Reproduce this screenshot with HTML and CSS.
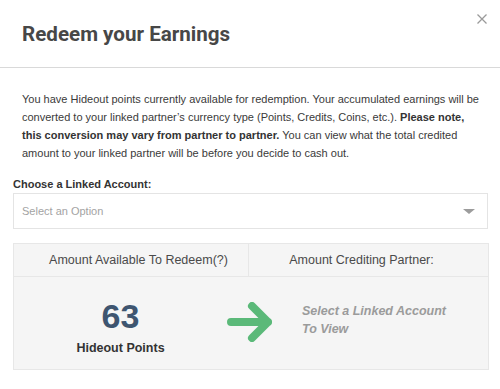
FILE: index.html
```html
<!DOCTYPE html>
<html lang="en">
  <head>
    <meta charset="UTF-8" />
    <meta name="viewport" content="width=device-width, initial-scale=1.0" />
    <title>Redeem your Earnings</title>
    <link rel="stylesheet" href="styles.css">
  </head>
  <body>
    <div class="modal">
      <div class="modal-header">
        <h2 class="modal-title">Redeem your Earnings</h2>
        <button class="close-btn" aria-label="Close">
          <svg width="10" height="10" viewBox="0 0 10 10">
            <path d="M0.5 0.5 L9.5 9.5 M9.5 0.5 L0.5 9.5" stroke="#9a9a9a" stroke-width="1.3" />
          </svg>
        </button>
      </div>

      <div class="modal-body">
        <p class="intro">
          You have Hideout points currently available for redemption. Your accumulated earnings will be
          converted to your linked partner’s currency type (Points, Credits, Coins, etc.).
          <strong>Please note,</strong>
          <strong>this conversion may vary from partner to partner.</strong>
          You can view what the total credited amount to your linked partner will be before you decide to cash out.
        </p>

        <label class="field-label">Choose a Linked Account:</label>
        <div class="select-box">
          <span>Select an Option</span>
          <span class="caret"></span>
        </div>

        <div class="summary">
          <div class="summary-head">
            <div class="head-left">Amount Available To Redeem(?)</div>
            <div class="head-right">Amount Crediting Partner:</div>
          </div>
          <div class="summary-body">
            <div class="points">
              <div class="points-value">63</div>
              <div class="points-label">Hideout Points</div>
            </div>
            <svg class="arrow" width="45" height="40" viewBox="0 0 45 40">
              <path d="M4 20 H41 M25 4 L41 20 L25 36" fill="none" stroke="#5bb979" stroke-width="8" stroke-linecap="round" stroke-linejoin="round" />
            </svg>
            <div class="partner-note">Select a Linked Account<br />To View</div>
          </div>
        </div>
      </div>
    </div>
  </body>
</html>
```

FILE: styles.css
```css
body {
  margin: 0;
  background: #ffffff;
  font-family: "Liberation Sans", Arial, sans-serif;
  color: #333333;
}

.modal {
  width: 500px;
}

.modal-header {
  display: flex;
  justify-content: space-between;
  align-items: flex-start;
  height: 45px;
  padding: 22px 13px 0 22px;
  border-bottom: 1px solid #d9d9d9;
}

.modal-title {
  margin: 0;
  font-family: Roboto, "Liberation Sans", sans-serif;
  font-weight: 700;
  font-size: 20.6px;
  line-height: 24px;
  color: #474747;
}

.close-btn {
  background: none;
  border: none;
  padding: 0;
  margin-top: -8px;
  width: 10px;
  height: 10px;
  display: flex;
}

.modal-body {
  padding: 0 11px 0 13px;
}

.intro {
  margin: 22px 0 0;
  padding: 0 9px;
  font-size: 11px;
  line-height: 18px;
  color: #3a3a3a;
}

.intro strong {
  color: #333333;
}

.field-label {
  display: block;
  margin-top: 15px;
  font-size: 11px;
  font-weight: 700;
  line-height: 14px;
  color: #333333;
}

.select-box {
  display: flex;
  justify-content: space-between;
  align-items: center;
  height: 34px;
  margin: 2px 1px 0 0;
  padding: 0 12px 0 8px;
  border: 1px solid #e4e4e4;
  font-size: 11px;
  color: #a3a3a3;
}

.caret {
  width: 0;
  height: 0;
  border-left: 6px solid transparent;
  border-right: 6px solid transparent;
  border-top: 5px solid #9c9c9c;
}

.summary {
  margin-top: 14px;
  background: #f5f5f5;
  border: 1px solid #e7e7e7;
}

.summary-head {
  display: grid;
  grid-template-columns: 235px 1fr;
  border-bottom: 1px solid #e7e7e7;
  font-size: 12.5px;
  line-height: 32px;
  color: #4a4a4a;
  text-align: center;
}

.head-left {
  padding-left: 15px;
  border-right: 1px solid #e7e7e7;
}

.head-right {
  padding-right: 14px;
}

.summary-body {
  display: grid;
  grid-template-columns: 213px 45px auto;
  align-items: start;
  padding: 21px 0 13px;
}

.points {
  text-align: center;
}

.points-value {
  font-size: 34px;
  font-weight: 700;
  line-height: 36px;
  color: #3e5570;
}

.points-label {
  margin-top: 6px;
  font-size: 12.5px;
  font-weight: 700;
  line-height: 16px;
  color: #333333;
}

.arrow {
  margin-top: 4px;
}

.partner-note {
  margin: 4px 0 0 30px;
  font-size: 12.5px;
  font-weight: 700;
  font-style: italic;
  line-height: 18px;
  color: #9b9b9b;
}
```
